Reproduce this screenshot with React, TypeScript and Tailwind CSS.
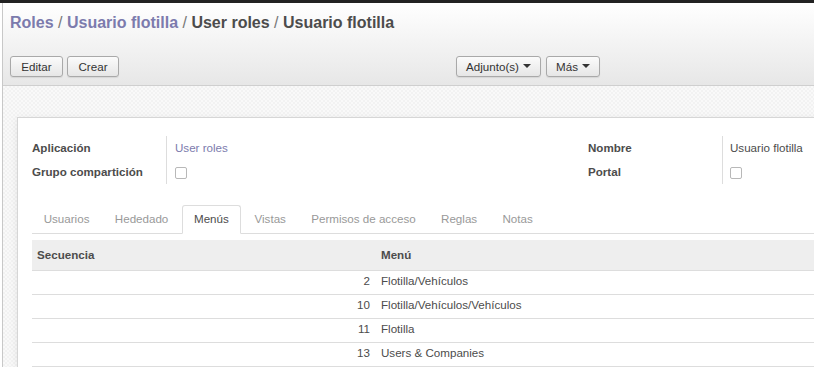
import React from 'react'

interface MenuRow {
  seq: number
  name: string
}

const rows: MenuRow[] = [
  { seq: 2, name: 'Flotilla/Vehículos' },
  { seq: 10, name: 'Flotilla/Vehículos/Vehículos' },
  { seq: 11, name: 'Flotilla' },
  { seq: 13, name: 'Users & Companies' },
]

const tabs = ['Usuarios', 'Hededado', 'Menús', 'Vistas', 'Permisos de acceso', 'Reglas', 'Notas']

function Caret() {
  return <span className="inline-block ml-[4px] mb-[2px] align-middle border-x-[4px] border-x-transparent border-t-[4px] border-t-[#333]" />
}

function Checkbox() {
  return <span className="block w-[12px] h-[12px] rounded-[2px] border border-[#b8b8b8] bg-white" />
}

function Btn({ label, width, caret }: { label: string; width: string; caret?: boolean }) {
  return (
    <button
      className={`${width} h-[21px] rounded-[3px] border border-[#a9a9a9] bg-gradient-to-b from-[#fbfbfb] to-[#e6e6e6] text-[11.6px] leading-[18px] text-[#333] shadow-[0_1px_1px_rgba(0,0,0,0.08)]`}
    >
      {label}
      {caret && <Caret />}
    </button>
  )
}

export default function App() {
  return (
    <div className="w-[814px] h-[367px] overflow-hidden bg-[#222] pt-[3px] font-['Liberation_Sans',Arial,sans-serif] text-[11.6px] text-[#4c4c4c]">
      <div className="h-full bg-white pl-[2px]">
        <div className="h-full border-l border-[#c8c8c8] flex flex-col">
          {/* control panel */}
          <div className="h-[83px] shrink-0 border-b border-[#cfcfcf] bg-gradient-to-b from-white to-[#e7e7e7] pl-[7px]">
            <div className="pt-[9px] text-[16px] leading-[22px] font-bold whitespace-nowrap">
              <span className="text-[#7c7bad]">Roles</span>
              <span className="text-[#777] font-normal"> / </span>
              <span className="text-[#7c7bad]">Usuario flotilla</span>
              <span className="text-[#777] font-normal"> / </span>
              <span className="text-[#4c4c4c]">User roles</span>
              <span className="text-[#777] font-normal"> / </span>
              <span className="text-[#4c4c4c]">Usuario flotilla</span>
            </div>
            <div className="mt-[22px] grid grid-cols-[446px_1fr]">
              <div className="flex gap-[4px]">
                <Btn label="Editar" width="w-[53px]" />
                <Btn label="Crear" width="w-[52px]" />
              </div>
              <div className="flex gap-[5px]">
                <Btn label="Adjunto(s)" width="w-[85px]" caret />
                <Btn label="Más" width="w-[54px]" caret />
              </div>
            </div>
          </div>

          {/* content */}
          <div className="flex-1 bg-[#f6f6f6] bg-[repeating-conic-gradient(#f2f2f2_0_25%,#f9f9f9_0_50%)] bg-[length:4px_4px] pl-[14px] pt-[31px]">
            <div className="w-[1160px] bg-white border border-[#d6d6d6] shadow-[0_2px_8px_rgba(0,0,0,0.08)] pl-[14px] pt-[15px]">
              <div className="grid grid-cols-[556px_556px]">
                <div className="grid grid-cols-[134px_1fr] py-[3px]">
                  <div className="font-bold leading-[24px]">
                    <div>Aplicación</div>
                    <div>Grupo compartición</div>
                  </div>
                  <div className="border-l border-[#ddd] pl-[8px] leading-[24px]">
                    <div className="text-[#7c7bad]">User roles</div>
                    <div className="h-[24px] flex items-center pt-[2px]">
                      <Checkbox />
                    </div>
                  </div>
                </div>
                <div className="grid grid-cols-[134px_1fr] py-[3px]">
                  <div className="font-bold leading-[24px]">
                    <div>Nombre</div>
                    <div>Portal</div>
                  </div>
                  <div className="border-l border-[#ddd] pl-[7px] leading-[24px]">
                    <div>Usuario flotilla</div>
                    <div className="h-[24px] flex items-center pt-[2px]">
                      <Checkbox />
                    </div>
                  </div>
                </div>
              </div>

              {/* tabs */}
              <div className="mt-[18px] flex border-b border-[#ddd] whitespace-nowrap">
                {tabs.map((t) => (
                  <div
                    key={t}
                    className={
                      t === 'Menús'
                        ? 'mr-[2px] -mb-px h-[29px] px-[11px] leading-[26px] rounded-t-[3px] border border-[#ddd] border-b-white bg-white text-[#4c4c4c]'
                        : 'mr-[2px] -mb-px h-[29px] px-[10.7px] leading-[26px] border border-transparent text-[#999]'
                    }
                  >
                    {t}
                  </div>
                ))}
              </div>

              {/* table */}
              <div className="mt-[6px]">
                <div className="grid grid-cols-[344px_1fr] h-[31px] bg-[#eee] border-b border-[#ddd] font-bold items-center">
                  <div className="pl-[5px]">Secuencia</div>
                  <div className="pl-[5px]">Menú</div>
                </div>
                {rows.map((r) => (
                  <div key={r.seq} className="grid grid-cols-[344px_1fr] h-[24px] pb-[3px] border-b border-[#ddd] items-center">
                    <div className="text-right pr-[6px]">{r.seq}</div>
                    <div className="pl-[5px]">{r.name}</div>
                  </div>
                ))}
              </div>
            </div>
          </div>
        </div>
      </div>
    </div>
  )
}
